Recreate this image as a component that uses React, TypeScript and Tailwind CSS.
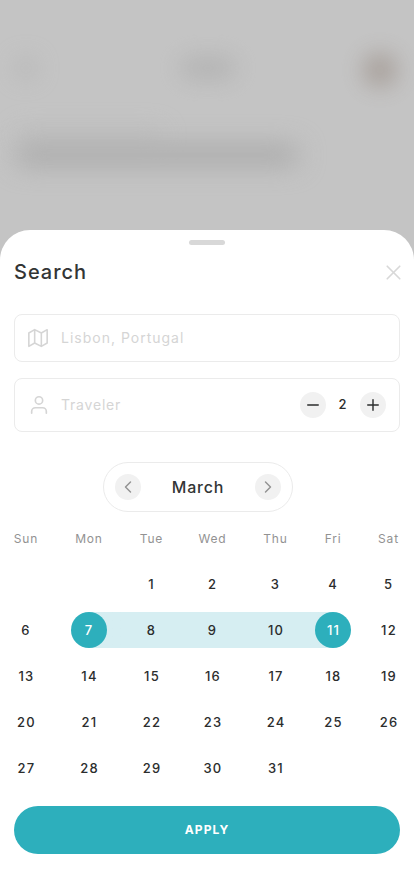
import { ChevronLeft, ChevronRight, Minus, Plus, X } from "lucide-react";

const weekdays = ["Sun", "Mon", "Tue", "Wed", "Thu", "Fri", "Sat"];
const firstWeekday = 2;
const daysInMonth = 31;
const range = { start: 7, end: 11 };

const columns = "grid grid-cols-[52px_74px_51px_71px_55px_60px_51px]";

const cells = [
  ...Array.from({ length: firstWeekday }, () => null),
  ...Array.from({ length: daysInMonth }, (_, i) => i + 1),
];

function MapIcon() {
  return (
    <svg
      className="size-5 shrink-0"
      fill="none"
      stroke="currentColor"
      strokeLinecap="round"
      strokeLinejoin="round"
      strokeWidth="1.9"
      viewBox="0 0 24 24"
    >
      <path d="M1 6v16l7-4 8 4 7-4V2l-7 4-8-4-7 4zM8 2v16M16 6v16" />
    </svg>
  );
}

function UserIcon() {
  return (
    <svg
      className="size-[22px] shrink-0"
      fill="none"
      stroke="currentColor"
      strokeLinecap="round"
      strokeLinejoin="round"
      strokeWidth="1.8"
      viewBox="0 0 24 24"
    >
      <path d="M20 21v-2a4 4 0 0 0-4-4H8a4 4 0 0 0-4 4v2" />
      <circle cx="12" cy="7" r="4" />
    </svg>
  );
}

function Backdrop() {
  return (
    <div className="h-[260px] overflow-hidden bg-[#c4c4c4] pt-[56px]">
      <div className="flex h-6 items-center justify-between pr-[18px] pl-4">
        <span className="h-5 w-5 rounded-full bg-[#a9a9a9] opacity-60 blur-[12px]" />
        <span className="ml-4 h-5 w-14 rounded-full bg-[#acacac] opacity-80 blur-[12px]" />
        <span className="mt-1 size-8 rounded-full bg-[#a0968f] opacity-90 blur-[12px]" />
      </div>
      <div className="mt-[49px] ml-[17px] h-3 w-[146px] bg-[#b8b8b8] opacity-60 blur-[12px]" />
      <div className="mt-1 ml-[15px] h-5 w-[284px] rounded-full bg-[#a9a9a9] blur-[13px]" />
    </div>
  );
}

function DayCell({ day }: { day: number | null }) {
  if (day === null) return <span />;

  const isStart = day === range.start;
  const isEnd = day === range.end;
  const inside = day > range.start && day < range.end;

  let band = "";
  if (isStart) band = "bg-linear-to-r from-transparent from-50% to-[#d6eef2] to-50%";
  if (isEnd) band = "bg-linear-to-l from-transparent from-50% to-[#d6eef2] to-50%";
  if (inside) band = "bg-[#d6eef2]";

  return (
    <div className={`flex h-9 items-center justify-center ${band}`}>
      <span
        className={`flex size-9 items-center justify-center rounded-full pt-0.5 ${
          isStart || isEnd ? "bg-[#2dafbc] text-white" : "text-[#2b2d2d]"
        } ${day > 9 ? "pl-px" : ""}`}
      >
        {day}
      </span>
    </div>
  );
}

function Calendar() {
  return (
    <section>
      <div className="mt-[30px] ml-[103px] flex h-[50px] w-[190px] items-center justify-between rounded-full border border-[#ebebeb] px-[11px]">
        <button className="flex size-[26px] items-center justify-center rounded-full bg-[#f1f1f1] text-[#929292]">
          <ChevronLeft className="size-5" strokeWidth={1.7} />
        </button>
        <span className="text-base font-medium tracking-[0.8px] text-[#333535]">March</span>
        <button className="flex size-[26px] items-center justify-center rounded-full bg-[#f1f1f1] text-[#929292]">
          <ChevronRight className="size-5" strokeWidth={1.7} />
        </button>
      </div>

      <div className={`${columns} mt-[18px] h-[18px] text-xs leading-[18px] tracking-[0.8px] text-[#929292]`}>
        {weekdays.map((name) => (
          <span className="text-center" key={name}>
            {name}
          </span>
        ))}
      </div>

      <div className={`${columns} mt-[18px] gap-y-2.5 text-[13px] font-medium tracking-[1.2px]`}>
        {cells.map((day, i) => (
          <DayCell day={day} key={i} />
        ))}
      </div>
    </section>
  );
}

export default function App() {
  return (
    <main className="h-[896px] w-[414px] overflow-hidden bg-[#c4c4c4] font-['Inter',sans-serif]">
      <Backdrop />

      <div className="relative -mt-[30px] h-[666px] rounded-t-[30px] bg-white pt-2.5">
        <div className="mx-auto h-[5px] w-9 rounded-full bg-[#d8d8d8]" />

        <header className="mt-3 flex h-[30px] items-center justify-between pr-2 pl-3.5">
          <h1 className="text-xl font-medium tracking-[1px] text-[#333535]">Search</h1>
          <X className="size-[25px]" color="#d8d8d8" strokeWidth={1.6} />
        </header>

        <div className="mx-3.5 mt-[27px] flex h-12 items-center gap-3 rounded-lg border border-[#ebebeb] pl-[13px] text-[#d5d5d5]">
          <MapIcon />
          <span className="pl-px text-sm tracking-[1px]">Lisbon, Portugal</span>
        </div>

        <div className="mx-3.5 mt-4 flex h-[54px] items-center gap-[11px] rounded-lg border border-[#ebebeb] pr-[13px] pl-[13px] text-[#d5d5d5]">
          <UserIcon />
          <span className="flex-1 text-sm tracking-[0.8px]">Traveler</span>
          <div className="flex items-center text-[#2b2d2d]">
            <button className="flex size-[26px] items-center justify-center rounded-full bg-[#f1f1f1]">
              <Minus className="size-[18px]" strokeWidth={1.9} />
            </button>
            <span className="w-[34px] pr-px text-center text-[13px] font-medium">2</span>
            <button className="flex size-[26px] items-center justify-center rounded-full bg-[#f1f1f1]">
              <Plus className="size-[18px]" strokeWidth={1.9} />
            </button>
          </div>
        </div>

        <Calendar />

        <button className="mx-3.5 mt-5 flex h-12 w-[386px] items-center justify-center rounded-full bg-[#2dafbc] text-xs font-bold tracking-[1.1px] text-white">
          APPLY
        </button>
      </div>
    </main>
  );
}
